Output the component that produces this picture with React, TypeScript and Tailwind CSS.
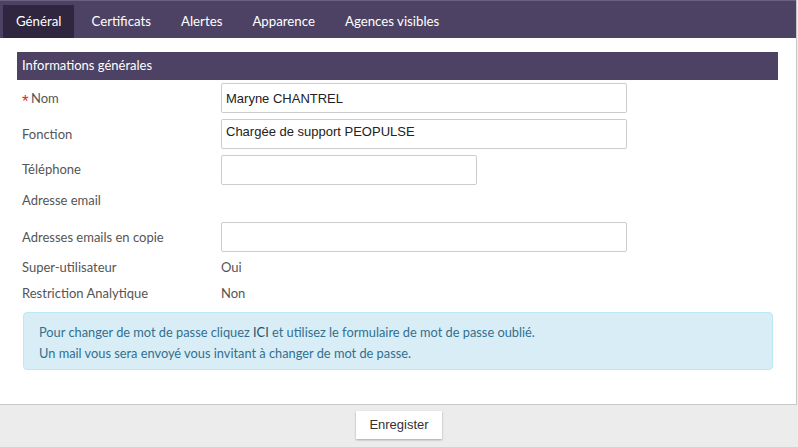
import React from "react";

export default function App() {
  const tabs = ["Général", "Certificats", "Alertes", "Apparence", "Agences visibles"];
  return (
    <div className="w-[798px] h-[447px] bg-[#ececec] overflow-hidden font-['Lato',sans-serif]">
      <div className="w-[797px] bg-white border-r border-b border-[#c8c8c8]">
        {/* Tab bar */}
        <div className="h-[38px] w-[796px] bg-[#4d4263] border-t border-[#6a6080] flex items-end pl-[3px]">
          {tabs.map((t, i) => (
            <div
              key={t}
              className={
                "h-[33px] flex items-center text-[13.25px] text-white " +
                (i === 0 ? "bg-[#30263f] pl-[13px] pr-[13px] mr-[2px]" : "px-[15px]")
              }
            >
              {t}
            </div>
          ))}
        </div>

        {/* Body */}
        <div className="pl-[17px] pr-[18px] pt-[14px] pb-[34px]">
          <div className="h-[28px] bg-[#4d4263] text-white text-[13px] flex items-center pl-[5px]">
            Informations générales
          </div>

          <div className="pl-[5px] mt-[3px] text-[13px] text-[#555555]">
            <div className="flex items-start h-[30px]">
              <div className="w-[199px] pt-[4px] flex items-center">
                <span className="inline-block w-[9px] text-[#e0262b] text-[17px] leading-none pt-[6px] font-['Liberation_Sans',Arial,sans-serif]">*</span>
                <span>Nom</span>
              </div>
              <input
                readOnly
                value="Maryne CHANTREL"
                className="w-[406px] h-[30px] border border-[#cccccc] rounded-[2px] px-[4px] text-[13px] text-[#222] font-['Liberation_Sans',Arial,sans-serif] outline-none"
              />
            </div>

            <div className="flex items-center h-[30px] mt-[6px]">
              <div className="w-[199px] pt-[2px]">Fonction</div>
              <div className="w-[406px] h-[30px] border border-[#cccccc] rounded-[2px] px-[4px] pt-[2px] text-[13px] text-[#222] font-['Liberation_Sans',Arial,sans-serif]">
                Chargée de support PEOPULSE
              </div>
            </div>

            <div className="flex items-center h-[30px] mt-[6px]">
              <div className="w-[199px]">Téléphone</div>
              <div className="w-[256px] h-[30px] border border-[#cccccc] rounded-[2px]" />
            </div>

            <div className="flex items-center h-[32px]">
              <div className="w-[199px]">Adresse email</div>
            </div>

            <div className="flex items-center h-[30px] mt-[5px]">
              <div className="w-[199px] pt-[2px]">Adresses emails en copie</div>
              <div className="w-[406px] h-[30px] border border-[#cccccc] rounded-[2px]" />
            </div>

            <div className="flex items-center h-[26px] mt-[3px]">
              <div className="w-[199px]">Super-utilisateur</div>
              <div>Oui</div>
            </div>

            <div className="flex items-center h-[26px]">
              <div className="w-[199px]">Restriction Analytique</div>
              <div>Non</div>
            </div>
          </div>

          <div className="ml-[6px] mr-[5px] mt-[5px] h-[58px] bg-[#d9edf7] border border-[#bce8f1] rounded-[4px] pl-[15px] pt-[9px] text-[12.8px] leading-[21px] text-[#31708f]">
            <div>
              Pour changer de mot de passe cliquez <span className="text-[#245269]">ICI</span> et utilisez le formulaire de mot de passe oublié.
            </div>
            <div>Un mail vous sera envoyé vous invitant à changer de mot de passe.</div>
          </div>
        </div>
      </div>

      <div className="flex justify-center pt-[6px]">
        <button className="h-[28px] px-[13px] bg-white text-[13px] text-[#333] font-['Liberation_Sans',Arial,sans-serif] shadow-[0_1px_2px_rgba(0,0,0,0.3)]">
          Enregister
        </button>
      </div>
    </div>
  );
}
